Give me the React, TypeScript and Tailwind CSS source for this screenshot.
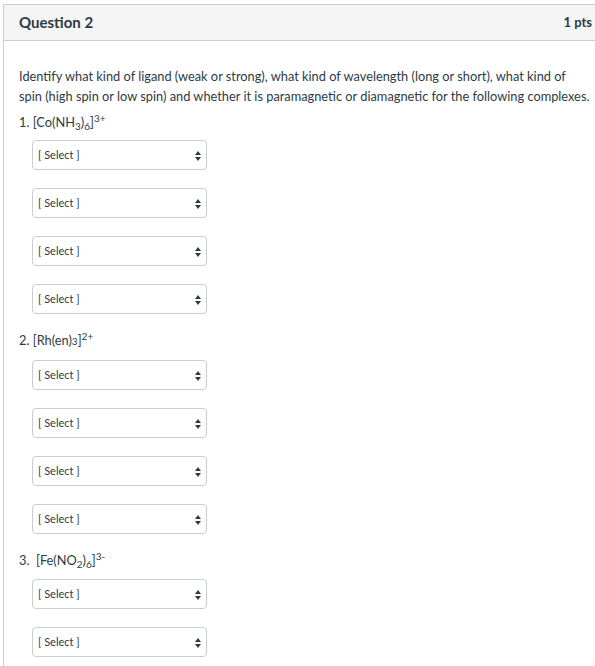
const font = { fontFamily: 'Lato, "Open Sans", sans-serif' };

const SelectBox = () => (
  <div className="relative flex h-[30px] w-[175px] items-center rounded-[4px] border border-[#c7cdd1] bg-white pl-[5px] text-[11px] text-[#2d3b45]">
    <span>[ Select ]</span>
    <svg className="absolute right-[5px] top-[10px]" width="6" height="10" viewBox="0 0 6 10">
      <path d="M3 0 L6 4 L0 4 Z" fill="#2d3b45" />
      <path d="M3 10 L6 6 L0 6 Z" fill="#2d3b45" />
    </svg>
  </div>
);

const Selects = ({ n }: { n: number }) => (
  <div className="flex flex-col gap-[18px] pl-[13px]">
    {Array.from({ length: n }).map((_, i) => (
      <SelectBox key={i} />
    ))}
  </div>
);

export default function App() {
  return (
    <div className="bg-white pl-[3px] pt-[4px] text-[#2d3b45]" style={font}>
      <div className="w-[610px] border border-[#c7cdd1]">
        {/* Header */}
        <div className="flex h-[36px] items-center justify-between border-b border-[#c7cdd1] bg-[#f5f5f5] pl-[15px] pr-[20px]">
          <span className="text-[15px] font-bold">Question 2</span>
          <span className="text-[13px] font-bold">1 pts</span>
        </div>

        {/* Body */}
        <div className="px-[15px] pt-[25px] pb-[10px] text-[12.8px] leading-[20px]">
          <p className="whitespace-nowrap">
            Identify what kind of ligand (weak or strong), what kind of wavelength (long or short), what kind of
            <br />
            spin (high spin or low spin) and whether it is paramagnetic or diamagnetic for the following complexes.
          </p>
          <p className="mt-[6px] mb-[8px]">
            1. [Co(NH<sub className="text-[10px]">3</sub>)<sub className="text-[10px]">6</sub>]
            <sup className="text-[10px]">3+</sup>
          </p>
          <Selects n={4} />
          <p className="mt-[16px] mb-[9px]">
            2. [Rh(en)<span className="text-[10px]">3</span>]<sup className="text-[10px]">2+</sup>
          </p>
          <Selects n={4} />
          <p className="mt-[16px] mb-[9px]">
            3.&nbsp; [Fe(NO<sub className="text-[10px]">2</sub>)<sub className="text-[10px]">6</sub>]
            <sup className="text-[10px]">3-</sup>
          </p>
          <Selects n={2} />
        </div>
      </div>
    </div>
  );
}
